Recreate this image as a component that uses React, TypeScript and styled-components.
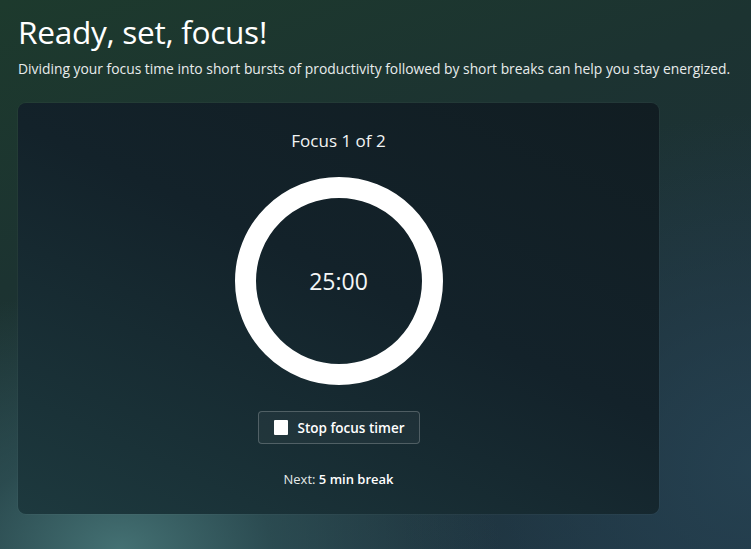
import styled, { createGlobalStyle } from "styled-components";

const GlobalStyle = createGlobalStyle`
  html, body {
    margin: 0;
    padding: 0;
  }
  body {
    font-family: "Open Sans", "Noto Sans", sans-serif;
    color: #ffffff;
  }
`;

const Page = styled.div`
  width: 751px;
  height: 549px;
  box-sizing: border-box;
  padding: 12px 18px 0;
  overflow: hidden;
  background:
    radial-gradient(ellipse 380px 260px at 16% 100%, rgba(70, 116, 118, 0.95) 0%, rgba(52, 92, 96, 0.6) 40%, rgba(0, 0, 0, 0) 100%),
    radial-gradient(circle at 100% 85%, rgba(38, 66, 82, 0.9) 0%, rgba(0, 0, 0, 0) 40%),
    linear-gradient(160deg, #1d3a2d 0%, #1c3331 35%, #1d3038 70%, #1e3442 100%);
`;

const Title = styled.h1`
  margin: 0;
  font-size: 31.6px;
  font-weight: 400;
  line-height: 40px;
  letter-spacing: -0.3px;
`;

const Subtitle = styled.p`
  margin: 8px 0 0;
  font-size: 13.85px;
  line-height: 18px;
  color: #e8ecec;
`;

const Card = styled.div`
  margin-top: 25px;
  width: 641px;
  height: 411px;
  box-sizing: border-box;
  border-radius: 8px;
  background: linear-gradient(205deg, #111d22 0%, #13222a 45%, #1d393e 100%);
  box-shadow: 0 0 0 1px rgba(255, 255, 255, 0.03);
  display: flex;
  flex-direction: column;
  align-items: center;
  padding-top: 27px;
`;

const Caption = styled.div`
  font-size: 17px;
  line-height: 22px;
  color: #f2f4f4;
`;

const Ring = styled.div`
  margin-top: 25px;
  width: 208px;
  height: 208px;
  box-sizing: border-box;
  border-radius: 50%;
  border: 21px solid #ffffff;
  display: flex;
  align-items: center;
  justify-content: center;
`;

const Time = styled.div`
  font-size: 23px;
  font-weight: 400;
  color: #f4f6f6;
`;

const StopButton = styled.button`
  margin-top: 26px;
  height: 33px;
  box-sizing: border-box;
  padding: 0 14px 0 15px;
  display: flex;
  align-items: center;
  gap: 10px;
  background: rgba(255, 255, 255, 0.04);
  border: 1px solid rgba(255, 255, 255, 0.22);
  border-radius: 4px;
  color: #ffffff;
  font-family: "Open Sans", "Noto Sans", sans-serif;
  font-size: 13.5px;
  font-weight: 600;
`;

const StopIcon = styled.span`
  width: 14px;
  height: 15px;
  border-radius: 1px;
  background: #ffffff;
`;

const Next = styled.div`
  margin-top: 26px;
  font-size: 13px;
  color: #e6eaea;
  b {
    font-weight: 600;
    color: #ffffff;
  }
`;

const App = () => {
  return (
    <Page>
      <GlobalStyle />
      <Title>Ready, set, focus!</Title>
      <Subtitle>
        Dividing your focus time into short bursts of productivity followed by short breaks can help you stay energized.
      </Subtitle>
      <Card>
        <Caption>Focus 1 of 2</Caption>
        <Ring>
          <Time>25:00</Time>
        </Ring>
        <StopButton>
          <StopIcon />
          Stop focus timer
        </StopButton>
        <Next>
          Next: <b>5 min break</b>
        </Next>
      </Card>
    </Page>
  );
};

export default App;
